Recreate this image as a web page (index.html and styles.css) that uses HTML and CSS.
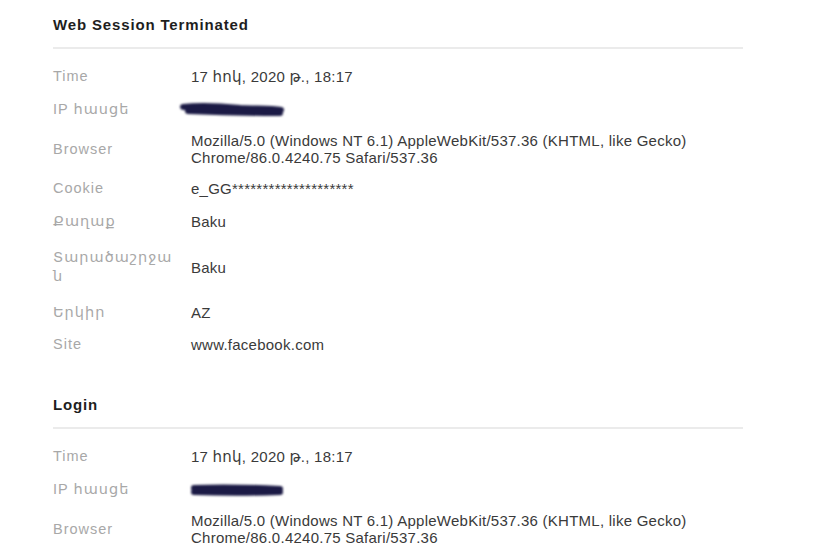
FILE: index.html
```html
<!DOCTYPE html>
<html lang="hy">
<head>
<meta charset="utf-8">
<title>Sessions</title>
<link rel="stylesheet" href="styles.css">
</head>
<body>
<main class="page">
  <section class="block">
    <h2 class="title">Web Session Terminated</h2>
    <div class="rows">
      <div class="row"><span class="label">Time</span><span class="value">17 հոկ, 2020 թ., 18:17</span></div>
      <div class="row"><span class="label">IP հասցե</span><span class="value"><svg class="redact" width="104" height="16" viewBox="0 0 104 16"><path d="M3 5 C20 3 40 4 60 6 C75 7 90 6 101 8 M8 9 C30 10 60 11 100 11" /></svg></span></div>
      <div class="row"><span class="label">Browser</span><span class="value">Mozilla/5.0 (Windows NT 6.1) AppleWebKit/537.36 (KHTML, like Gecko)<br>Chrome/86.0.4240.75 Safari/537.36</span></div>
      <div class="row"><span class="label">Cookie</span><span class="value">e_GG********************</span></div>
      <div class="row"><span class="label">Քաղաք</span><span class="value">Baku</span></div>
      <div class="row"><span class="label label-wrap">Տարածաշրջա<br>ն</span><span class="value">Baku</span></div>
      <div class="row"><span class="label">Երկիր</span><span class="value">AZ</span></div>
      <div class="row row-short"><span class="label">Site</span><span class="value">www.facebook.com</span></div>
    </div>
  </section>
  <section class="block block-next">
    <h2 class="title">Login</h2>
    <div class="rows">
      <div class="row"><span class="label">Time</span><span class="value">17 հոկ, 2020 թ., 18:17</span></div>
      <div class="row"><span class="label">IP հասցե</span><span class="value"><svg class="redact redact-2" width="92" height="16" viewBox="0 0 92 16"><path d="M3 6 C25 5 50 5 89 7 M3 10 C30 11 60 11 89 10" /></svg></span></div>
      <div class="row"><span class="label">Browser</span><span class="value">Mozilla/5.0 (Windows NT 6.1) AppleWebKit/537.36 (KHTML, like Gecko)<br>Chrome/86.0.4240.75 Safari/537.36</span></div>
      <div class="row"><span class="label">Cookie</span><span class="value">e_GG********************</span></div>
    </div>
  </section>
</main>
</body>
</html>
```

FILE: styles.css
```css
html, body {
  margin: 0;
  padding: 0;
  background: #ffffff;
}
body {
  font-family: "Liberation Sans", "DejaVu Sans", Arial, sans-serif;
  color: #333;
  height: 560px;
  overflow: hidden;
}
.page {
  width: 690px;
  margin-left: 53px;
}
.block-next {
  margin-top: 20px;
}
.title {
  margin: 0;
  padding: 16px 0 14px;
  font-size: 15px;
  line-height: 17px;
  letter-spacing: 0.85px;
  font-weight: bold;
  color: #1e1e1e;
  border-bottom: 2px solid #ebebeb;
}
.rows {
  padding-top: 11px;
}
.row {
  display: grid;
  grid-template-columns: 138px 1fr;
  align-items: center;
  padding: 6px 0;
  min-height: 33px;
  box-sizing: border-box;
}
.row-short {
  min-height: 31px;
  padding: 5px 0;
}
.label {
  font-size: 14.5px;
  line-height: 17px;
  letter-spacing: 1px;
  color: #a8a8a8;
}
.label-wrap {
  line-height: 19px;
  padding: 4px 0;
}
.value {
  font-size: 15px;
  line-height: 17px;
  letter-spacing: 0.25px;
  color: #3a3a3a;
}
.redact {
  display: block;
  margin-left: -11px;
  filter: blur(0.8px);
}
.redact path {
  fill: none;
  stroke: #1b1a45;
  stroke-width: 6;
  stroke-linecap: round;
}
.redact-2 {
  margin-left: 0;
}
```
